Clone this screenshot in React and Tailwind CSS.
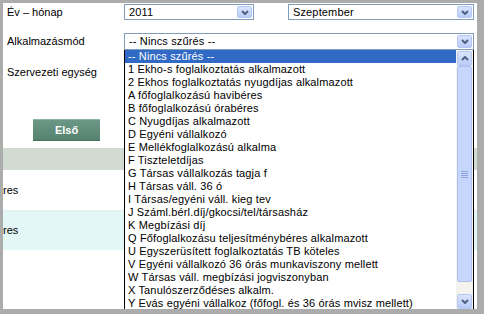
import React from 'react';

const options = [
  '-- Nincs szűrés --',
  '1 Ekho-s foglalkoztatás alkalmazott',
  '2 Ekhos foglalkoztatás nyugdíjas alkalmazott',
  'A főfoglalkozású havibéres',
  'B főfoglalkozású órabéres',
  'C Nyugdíjas alkalmazott',
  'D Egyéni vállalkozó',
  'E Mellékfoglalkozású alkalma',
  'F Tiszteletdíjas',
  'G Társas vállalkozás tagja f',
  'H Társas váll. 36 ó',
  'I Társas/egyéni váll. kieg tev',
  'J Száml.bérl.díj/gkocsi/tel/társasház',
  'K Megbízási díj',
  'Q Főfoglalkozásu teljesítménybéres alkalmazott',
  'U Egyszerüsített foglalkoztatás TB köteles',
  'V Egyéni vállalkozó 36 órás munkaviszony mellett',
  'W Társas váll. megbízási jogviszonyban',
  'X Tanulószerződéses alkalm.',
  'Y Evás egyéni vállalkoz (főfogl. és 36 órás mvisz mellett)',
];

const Chevron = ({ up }) => (
  <svg width="8" height="5" viewBox="0 0 8 5">
    <polyline
      points={up ? '1,4 4,1 7,4' : '1,1 4,4 7,1'}
      fill="none"
      stroke="#4d6185"
      strokeWidth="2"
    />
  </svg>
);

const ArrowBtn = ({ up, className }) => (
  <div
    className={`flex items-center justify-center rounded-[2px] border border-[#b4c7f3] bg-gradient-to-b from-[#dae4fd] to-[#b9cbf7] ${className}`}
  >
    <Chevron up={up} />
  </div>
);

const Select = ({ value, className }) => (
  <div className={`flex items-stretch border border-[#7f9db9] bg-white p-px ${className}`}>
    <span className="flex flex-1 items-center pl-[3px] tracking-[0.14px] whitespace-nowrap">{value}</span>
    <ArrowBtn className="w-[15px]" />
  </div>
);

export default function App() {
  return (
    <div className="w-[484px] h-[314px] bg-[#acacac] pl-[3px] pt-[3px] font-['Liberation_Sans',Arial,sans-serif] text-[11px] text-black">
      <div className="relative w-[474px] h-[306px] overflow-hidden bg-white">
        {/* szűrők */}
        <div className="mt-px flex h-[16px] items-center">
          <div className="w-[121px] pl-[4px]">Év – hónap</div>
          <Select value="2011" className="h-full w-[130px]" />
          <Select value="Szeptember" className="ml-[34px] h-full w-[186px]" />
        </div>

        <div className="mt-[13px] flex h-[17px] items-center">
          <div className="w-[121px] pl-[4px]">Alkalmazásmód</div>
          <Select value="-- Nincs szűrés --" className="h-full w-[350px]" />
        </div>

        <div className="mt-[14px] flex h-[16px] items-center">
          <div className="w-[121px] pl-[4px]">Szervezeti egység</div>
        </div>

        <button className="ml-[30px] mt-[39px] flex h-[22px] w-[67px] items-center justify-center border-t border-t-[#8db3a5] border-b border-b-[#47705f] bg-gradient-to-b from-[#6b9787] to-[#56836f] font-bold text-white">
          Első
        </button>

        {/* táblázat */}
        <div className="mt-[7px] h-[22px] bg-[#d2dbd2]" />
        <div className="flex h-[41px] items-center border-b border-[#e8eeee] bg-white">
          <span className="whitespace-nowrap">res</span>
        </div>
        <div className="flex h-[39px] items-center bg-[#e4f7f7]">
          <span className="whitespace-nowrap">res</span>
        </div>

        {/* lenyíló lista */}
        <div className="absolute left-[121px] top-[47px] flex h-[262px] w-[350px] border-x border-b border-black bg-white">
          <div className="flex-1 tracking-[0.14px]">
            {options.map((o, i) => (
              <div
                key={o}
                className={`h-[13px] px-[3px] leading-[13px] whitespace-nowrap ${
                  i === 0 ? 'bg-[#316ac5] text-white' : ''
                }`}
              >
                {o}
              </div>
            ))}
          </div>
          <div className="flex w-[17px] flex-col items-center bg-[#f4f3ee]">
            <ArrowBtn up className="mt-px h-[15px] w-[15px]" />
            <div className="flex h-[216px] w-[15px] items-center justify-center rounded-[2px] border border-[#adc2f4] bg-[#c6d6fc]">
              <div className="flex flex-col gap-px">
                <div className="h-px w-[7px] bg-[#8ea6e0]" />
                <div className="h-px w-[7px] bg-[#8ea6e0]" />
                <div className="h-px w-[7px] bg-[#8ea6e0]" />
                <div className="h-px w-[7px] bg-[#8ea6e0]" />
              </div>
            </div>
            <div className="h-[12px]" />
            <ArrowBtn className="h-[15px] w-[15px]" />
          </div>
        </div>
      </div>
    </div>
  );
}
